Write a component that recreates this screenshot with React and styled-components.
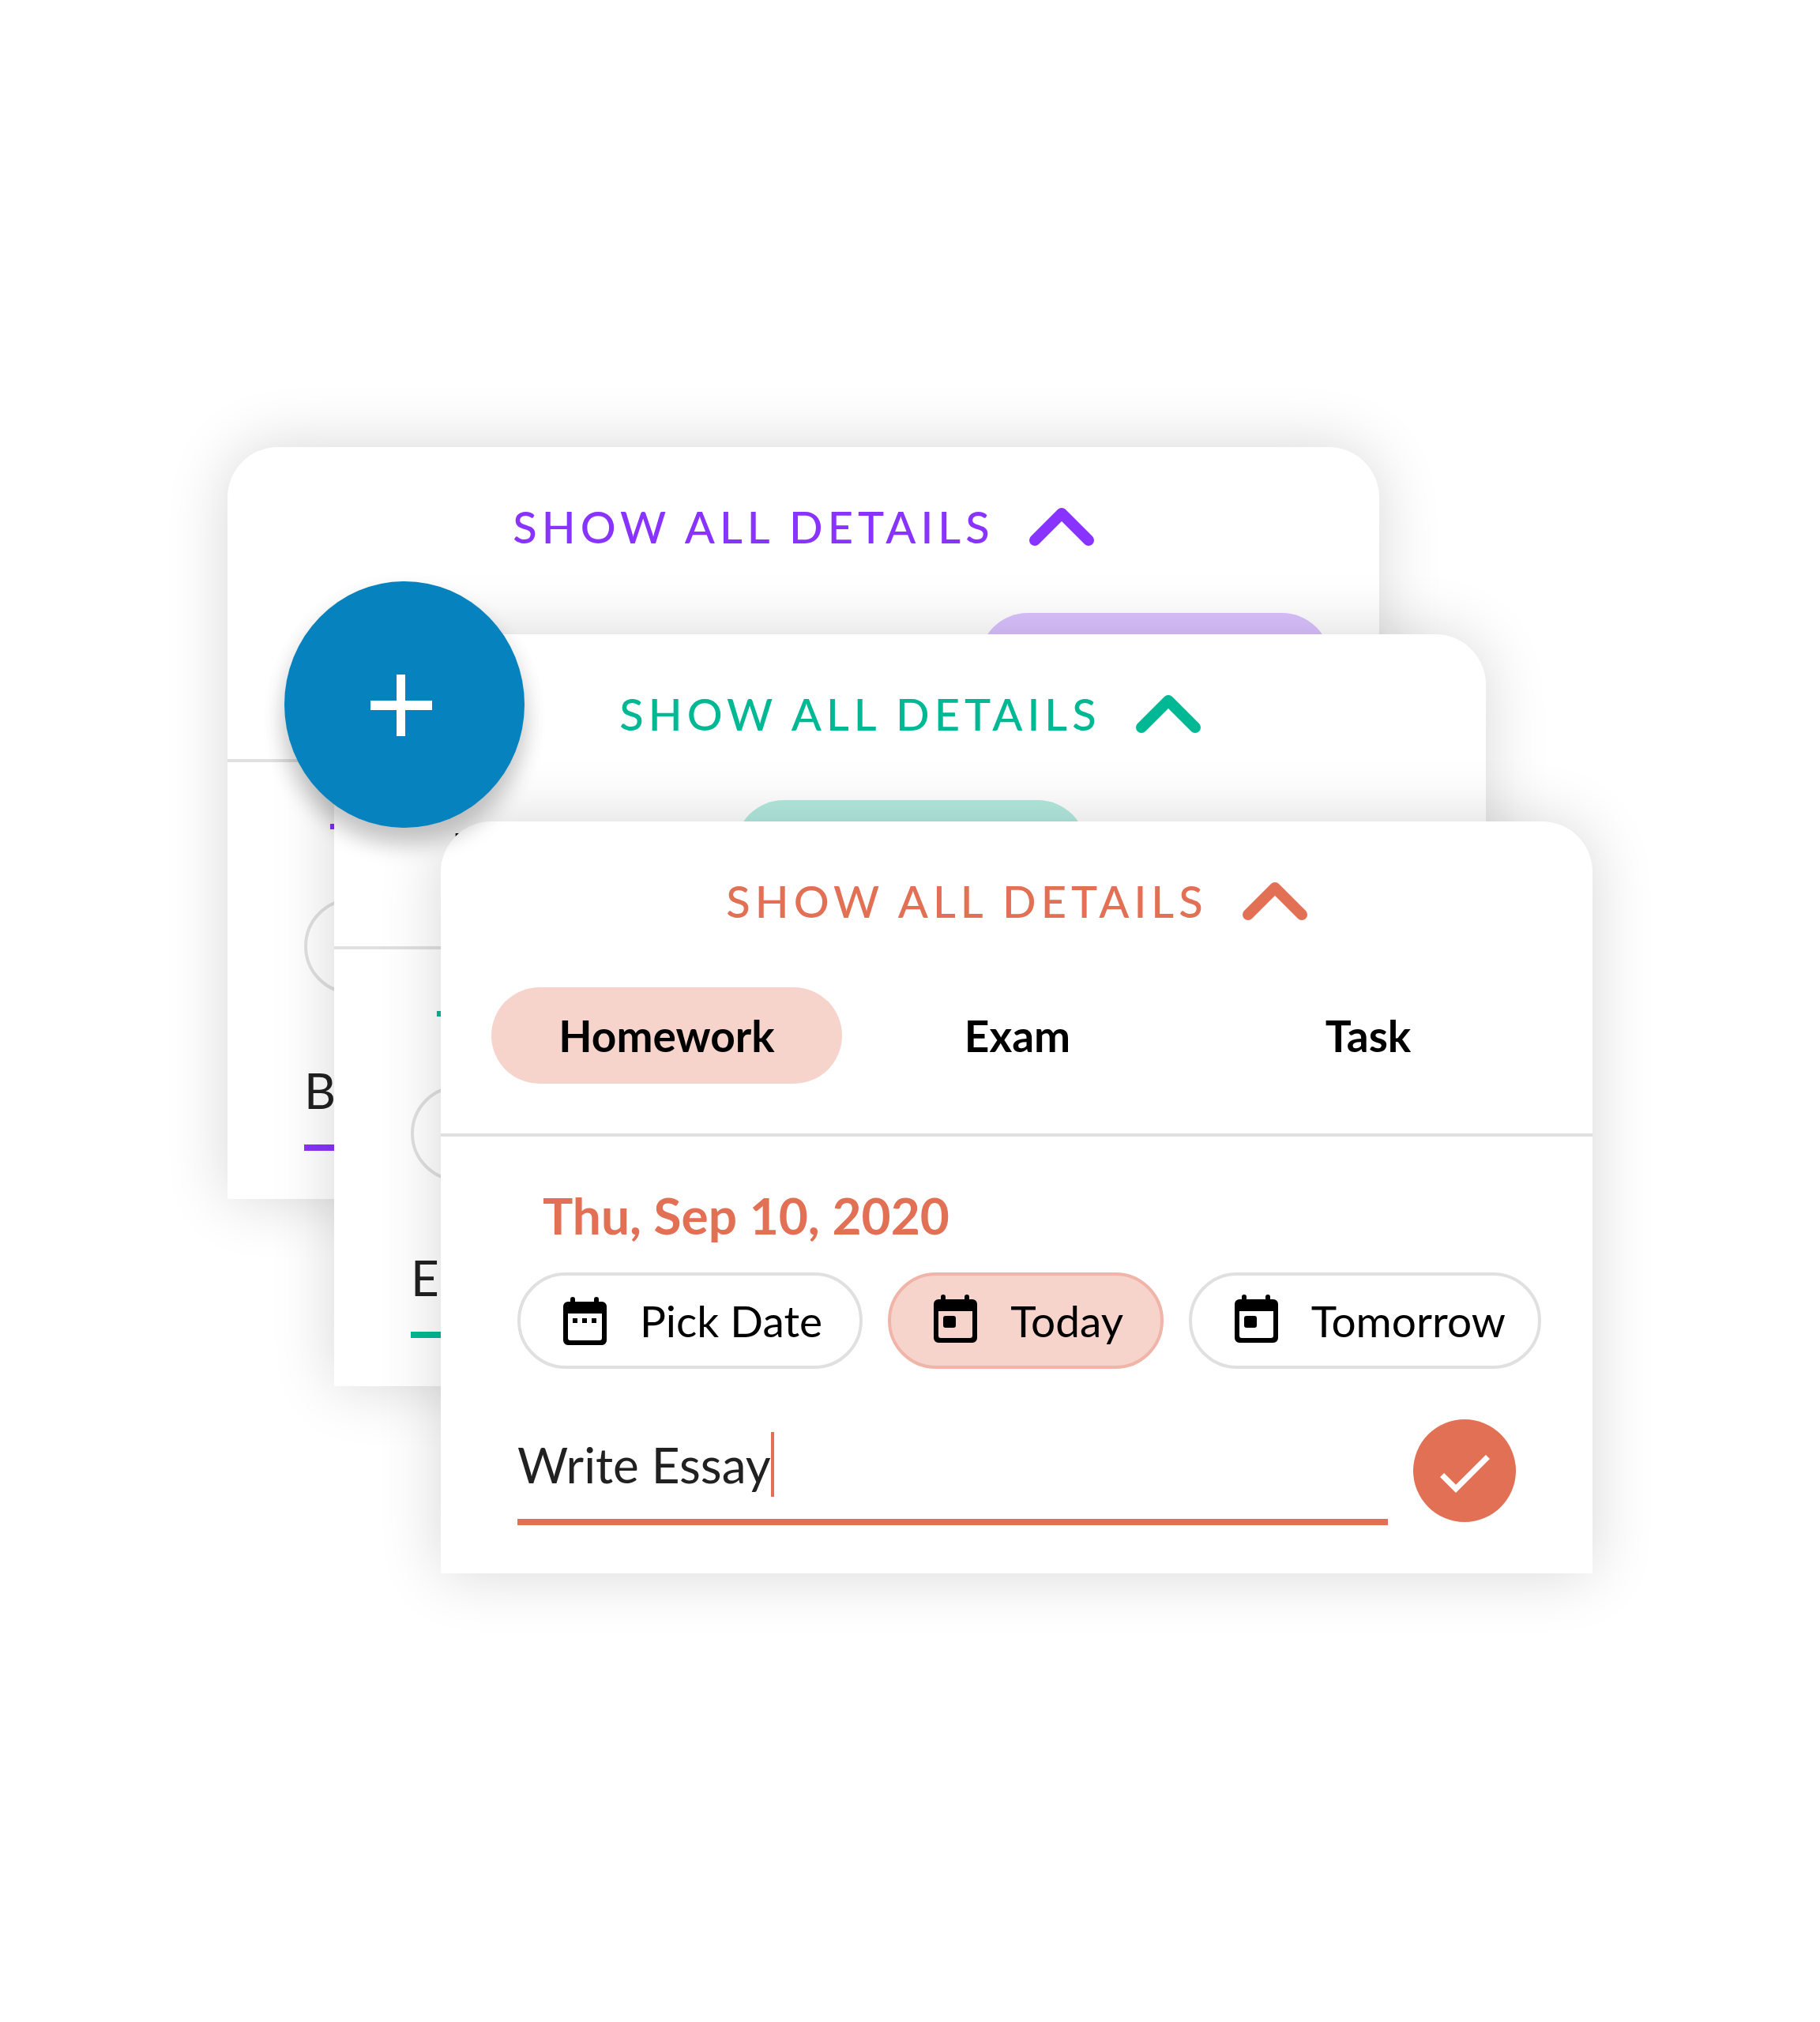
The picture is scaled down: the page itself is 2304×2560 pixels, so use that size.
import React, { useState } from "react";
import styled, { createGlobalStyle } from "styled-components";

const GlobalStyle = createGlobalStyle`
  *, *::before, *::after { box-sizing: border-box; }
  body {
    margin: 0;
    background: #fff;
    color: #000;
    font-family: Lato, "Open Sans", sans-serif;
  }
  button, input {
    margin: 0;
    padding: 0;
    border: 0;
    background: none;
    color: inherit;
    font: inherit;
  }
  button { cursor: pointer; }
  svg { display: block; flex: none; }
`;

const Page = styled.main`
  min-height: 100vh;
  padding-bottom: 2px;
  display: grid;
  place-items: center;
`;

const Stack = styled.div`
  position: relative;
  width: 75%;
  display: grid;
`;

const Card = styled.section`
  grid-area: 1 / 1;
  align-self: start;
  margin-top: ${({ $level }) => $level * 237}px;
  margin-left: ${({ $level }) => $level * 135}px;
  margin-right: ${({ $level }) => (2 - $level) * 135}px;
  border-radius: 64px 64px 0 0;
  background: #fff;
  box-shadow: 0 0 80px rgba(0, 0, 0, 0.16);
`;

const DetailsToggle = styled.button`
  width: 100%;
  padding: 65px 0 73px;
  display: flex;
  align-items: center;
  justify-content: center;
  gap: 44px;
  color: ${({ $accent }) => $accent};
  font-size: 56px;
  font-weight: 500;
  line-height: 72px;
  letter-spacing: 6px;
  text-transform: uppercase;
`;

const Tabs = styled.div`
  padding: 0 62px 63px 64px;
  display: grid;
  grid-template-columns: repeat(3, 1fr);
  border-bottom: 4px solid #e0e0e0;
`;

const Tab = styled.button`
  height: 122px;
  border-radius: 61px;
  background: ${({ $tint }) => $tint};
  font-size: 55px;
  font-weight: 700;
`;

const Body = styled.form`
  padding: 60px 97px 61px;
`;

const DueDate = styled.time`
  display: block;
  padding-left: 32px;
  color: ${({ $accent }) => $accent};
  font-size: 64px;
  font-weight: 700;
  line-height: 80px;
`;

const Chips = styled.div`
  margin: 32px -32px 64px 0;
  display: grid;
  grid-template-columns: 437fr 348fr 446fr;
  gap: 32px;
`;

const Chip = styled.button`
  height: 122px;
  padding-left: 54px;
  display: flex;
  align-items: center;
  gap: 42px;
  border: 4px solid ${({ $line }) => $line};
  border-radius: 61px;
  background: ${({ $tint }) => $tint};
  font-size: 55px;
  white-space: nowrap;
`;

const EntryRow = styled.div`
  display: flex;
  align-items: flex-start;
  gap: 32px;
`;

const Field = styled.label`
  flex: 1;
  min-width: 0;
  padding: 16px 0 28px;
  display: flex;
  border-bottom: 8px solid ${({ $accent }) => $accent};
`;

const TitleInput = styled.input`
  field-sizing: content;
  height: 82px;
  color: #212121;
  font-size: 62px;
  outline: none;
`;

const Caret = styled.span`
  width: 4px;
  height: 82px;
  background: ${({ $accent }) => $accent};
`;

const SaveButton = styled.button`
  flex: none;
  width: 130px;
  height: 130px;
  padding-top: 8px;
  display: grid;
  place-items: center;
  border-radius: 50%;
  background: ${({ $accent }) => $accent};
`;

const AddButton = styled.button`
  position: absolute;
  top: 170px;
  left: 72px;
  width: 304px;
  height: 312px;
  padding: 2px 9px 0 0;
  display: grid;
  place-items: center;
  border-radius: 50%;
  background: #0682be;
  box-shadow:
    0 22px 28px rgba(0, 0, 0, 0.19),
    0 14px 32px rgba(0, 0, 0, 0.07);
`;

const ChevronUp = () => (
  <svg width="82" height="48" viewBox="0 0 82 48" fill="none" aria-hidden="true">
    <path
      d="M7 41 41 7l34 34"
      stroke="currentColor"
      strokeWidth="14"
      strokeLinecap="round"
      strokeLinejoin="round"
    />
  </svg>
);

const CALENDAR_FRAME =
  "M9 6V3a3 3 0 0 1 6 0v3h24V3a3 3 0 0 1 6 0v3h4a6 6 0 0 1 6 6v43a6 6 0 0 1-6 6H6a6 6 0 0 1-6-6V12a6 6 0 0 1 6-6zM6 21v31a3 3 0 0 0 3 3h37a3 3 0 0 0 3-3V21z";

const DayIcon = () => (
  <svg width="55" height="66" viewBox="0 0 55 66" aria-hidden="true">
    <path fillRule="evenodd" d={CALENDAR_FRAME} />
    <rect x="12" y="27" width="16" height="15" rx="3" />
  </svg>
);

const MonthIcon = () => (
  <svg width="55" height="66" viewBox="0 -3 55 66" aria-hidden="true">
    <path fillRule="evenodd" d={CALENDAR_FRAME} />
    <path d="M12 27h6v6h-6zM24 27h6v6h-6zM36 27h6v6h-6z" />
  </svg>
);

const CheckIcon = () => (
  <svg width="63" height="48" viewBox="3.41 5.59 17.59 13.41" fill="#fff" aria-hidden="true">
    <path d="M9 16.17 4.83 12l-1.42 1.41L9 19 21 7l-1.41-1.41z" />
  </svg>
);

const PlusIcon = () => (
  <svg width="78" height="78" viewBox="0 0 78 78" fill="#fff" aria-hidden="true">
    <path d="M33 0h11v33h34v12H44v33H33V45H0V33h33z" />
  </svg>
);

const KINDS = ["Homework", "Exam", "Task"];

const DAYS = [
  { label: "Pick Date", Icon: MonthIcon },
  { label: "Today", Icon: DayIcon },
  { label: "Tomorrow", Icon: DayIcon },
];

const CARDS = [
  { kind: "Task", title: "B", accent: "#8833ff", tint: "#dbc2ff", line: "#c499ff" },
  { kind: "Exam", title: "E", accent: "#00b894", tint: "#b3eadf", line: "#80dcca" },
  {
    kind: "Homework",
    title: "Write Essay",
    accent: "#e17055",
    tint: "#f6d4cc",
    line: "#f0b5a8",
    focused: true,
  },
];

function EntryCard({ level, kind, title, accent, tint, line, focused }) {
  const [activeKind, setActiveKind] = useState(kind);
  const [activeDay, setActiveDay] = useState("Today");
  const [text, setText] = useState(title);

  return (
    <Card $level={level}>
      <DetailsToggle type="button" $accent={accent}>
        Show all details
        <ChevronUp />
      </DetailsToggle>
      <Tabs>
        {KINDS.map((name) => (
          <Tab
            key={name}
            type="button"
            aria-pressed={name === activeKind}
            $tint={name === activeKind ? tint : "transparent"}
            onClick={() => setActiveKind(name)}
          >
            {name}
          </Tab>
        ))}
      </Tabs>
      <Body onSubmit={(event) => event.preventDefault()}>
        <DueDate dateTime="2020-09-10" $accent={accent}>
          Thu, Sep 10, 2020
        </DueDate>
        <Chips>
          {DAYS.map(({ label, Icon }) => (
            <Chip
              key={label}
              type="button"
              aria-pressed={label === activeDay}
              $line={label === activeDay ? line : "#e0e0e0"}
              $tint={label === activeDay ? tint : "transparent"}
              onClick={() => setActiveDay(label)}
            >
              <Icon />
              {label}
            </Chip>
          ))}
        </Chips>
        <EntryRow>
          <Field $accent={accent}>
            <TitleInput
              aria-label="Title"
              value={text}
              onChange={(event) => setText(event.target.value)}
            />
            {focused && <Caret $accent={accent} />}
          </Field>
          <SaveButton type="submit" aria-label="Save" $accent={accent}>
            <CheckIcon />
          </SaveButton>
        </EntryRow>
      </Body>
    </Card>
  );
}

export default function App() {
  return (
    <>
      <GlobalStyle />
      <Page>
        <Stack>
          {CARDS.map((card, level) => (
            <EntryCard key={card.kind} level={level} {...card} />
          ))}
          <AddButton type="button" aria-label="Add">
            <PlusIcon />
          </AddButton>
        </Stack>
      </Page>
    </>
  );
}
